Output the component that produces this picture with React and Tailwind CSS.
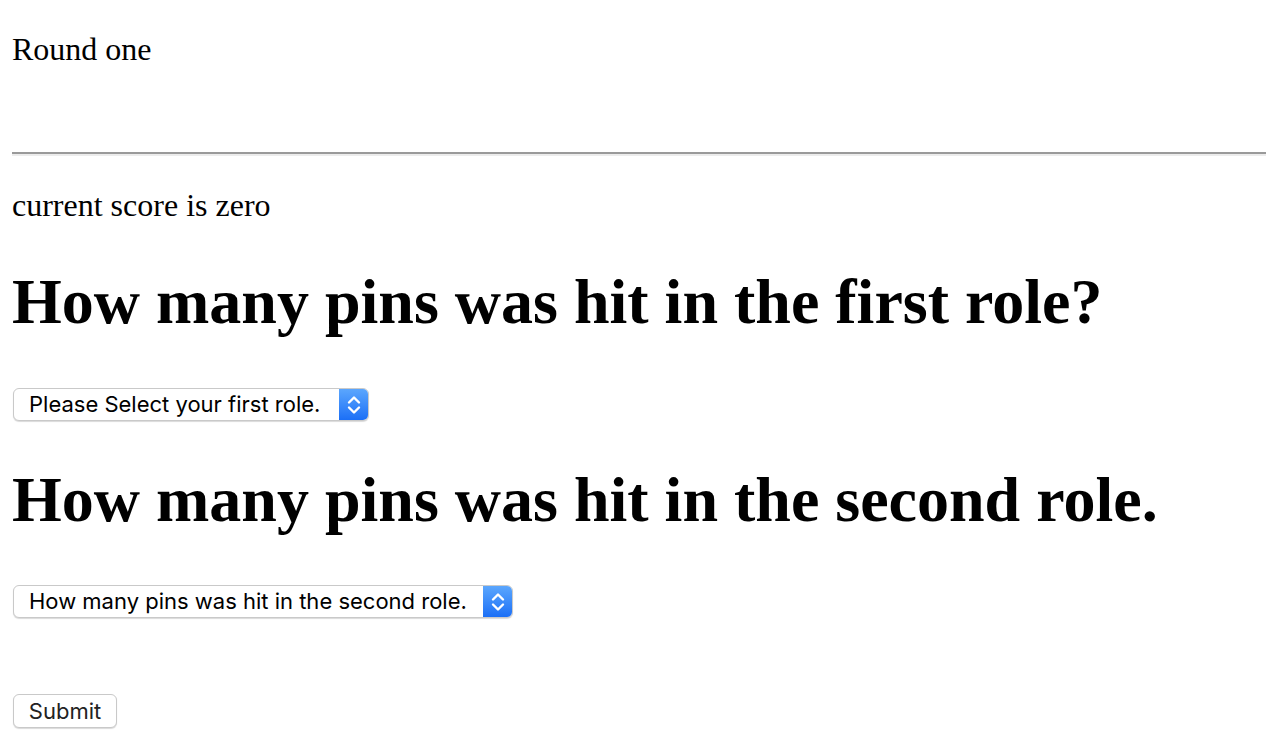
import React from "react";

function Chevrons() {
  return (
    <svg width="16" height="24" viewBox="0 0 16 24" fill="none">
      <path d="M3 9.5 L8 4.5 L13 9.5" stroke="white" strokeWidth="2.4" strokeLinecap="round" strokeLinejoin="round" />
      <path d="M3 14.5 L8 19.5 L13 14.5" stroke="white" strokeWidth="2.4" strokeLinecap="round" strokeLinejoin="round" />
    </svg>
  );
}

function FakeSelect({ label, width }) {
  return (
    <div
      className="flex h-[33px] items-stretch rounded-[6px] border border-[#c9c9c9] bg-white shadow-[0_1px_1px_rgba(0,0,0,0.15)] overflow-hidden ml-[1px]"
      style={{ width }}
    >
      <div className="flex flex-1 items-center pl-[15px] text-[22px] text-black" style={{ fontFamily: "Inter, 'Liberation Sans', sans-serif" }}>
        {label}
      </div>
      <div className="flex w-[29px] items-center justify-center bg-gradient-to-b from-[#5ba6fd] to-[#1b6ff6]">
        <Chevrons />
      </div>
    </div>
  );
}

export default function App() {
  return (
    <div className="bg-white min-h-[752px] pl-[12px] overflow-hidden" style={{ fontFamily: "'Liberation Serif', 'Times New Roman', serif" }}>
      <div className="pt-[31px] text-[32px] leading-[37px] text-black">Round one</div>
      <div className="mt-[84px] h-0 border-t-2 border-b-2 border-t-[#9a9a9a] border-b-[#ececec]"></div>
      <div className="mt-[31px] text-[32px] leading-[37px] text-black">current score is zero</div>
      <div className="mt-[41px] text-[64px] leading-[74px] font-bold text-black">How many pins was hit in the first role?</div>
      <div className="mt-[49px]">
        <FakeSelect label="Please Select your first role." width={356} />
      </div>
      <div className="mt-[42px] text-[64px] leading-[74px] font-bold text-black">How many pins was hit in the second role.</div>
      <div className="mt-[48px]">
        <FakeSelect label="How many pins was hit in the second role." width={500} />
      </div>
      <div className="mt-[76px]">
        <div
          className="ml-[1px] flex h-[34px] w-[104px] items-center justify-center rounded-[6px] border border-[#c9c9c9] bg-white shadow-[0_1px_1px_rgba(0,0,0,0.15)] text-[22px] text-[#222]"
          style={{ fontFamily: "Inter, 'Liberation Sans', sans-serif" }}
        >
          Submit
        </div>
      </div>
    </div>
  );
}
